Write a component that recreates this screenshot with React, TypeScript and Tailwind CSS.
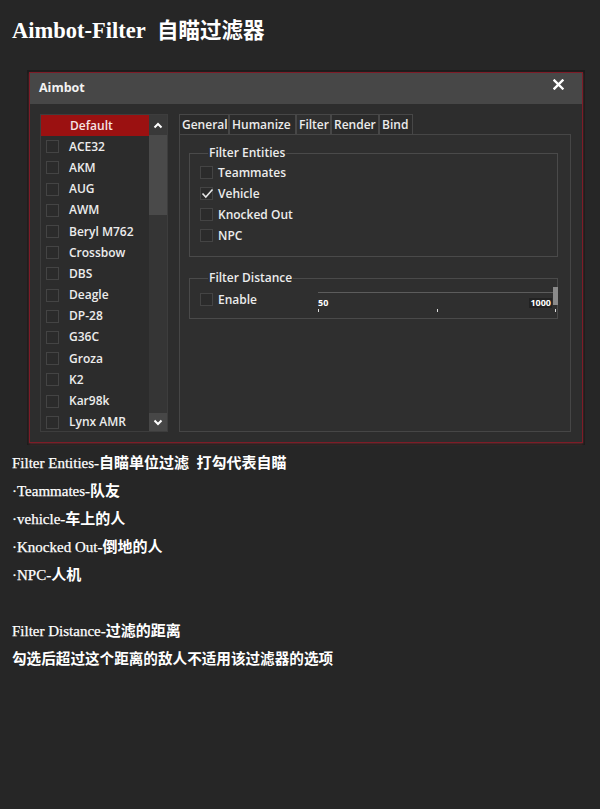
import React from "react";

const CJK = /([\u2E80-\u9FFF\uFF00-\uFFEF]+)/;

function Mixed({ text }: { text: string }) {
  const parts = text.split(CJK);
  return (
    <>
      {parts.map((p, i) =>
        CJK.test(p) ? (
          <span key={i} className="font-bold">
            {p}
          </span>
        ) : (
          <span key={i} className="[-webkit-text-stroke:0.25px_#ffffff]">
            {p}
          </span>
        )
      )}
    </>
  );
}

function Box({ checked }: { checked?: boolean }) {
  return (
    <span className="relative flex h-[13px] w-[13px] shrink-0 items-center justify-center border border-[#444444] bg-[#2b2b2b]">
      {checked && (
        <svg width="13" height="13" viewBox="0 0 13 13" className="absolute left-[0px] top-[-1px]">
          <polyline points="1.5,6.5 4.8,10 11.5,2.5" fill="none" stroke="#e6e6e6" strokeWidth="1.6" />
        </svg>
      )}
    </span>
  );
}

const weapons = [
  "ACE32",
  "AKM",
  "AUG",
  "AWM",
  "Beryl M762",
  "Crossbow",
  "DBS",
  "Deagle",
  "DP-28",
  "G36C",
  "Groza",
  "K2",
  "Kar98k",
  "Lynx AMR",
];

const tabs = [
  { name: "General", w: "w-[50px]" },
  { name: "Humanize", w: "w-[67px]" },
  { name: "Filter", w: "w-[35px]" },
  { name: "Render", w: "w-[48px]" },
  { name: "Bind", w: "w-[34px]" },
];

const lines = [
  "Filter Entities-自瞄单位过滤\u00a0\u00a0打勾代表自瞄",
  "·Teammates-队友",
  "·vehicle-车上的人",
  "·Knocked Out-倒地的人",
  "·NPC-人机",
];

export default function App() {
  const ui = { fontFamily: '"Open Sans", "Noto Sans", sans-serif' };
  return (
    <div className="min-h-[809px] w-[600px] bg-[#262626] text-white">
      <h1
        className="pl-[12px] pt-[17px] text-[22.5px] font-bold leading-[28px]"
        style={{ fontFamily: '"Liberation Serif", "Noto Sans CJK SC", serif' }}
      >
        Aimbot-Filter{"\u00a0\u00a0"}
        <span className="text-[21.5px]">自瞄过滤器</span>
      </h1>

      {/* screenshot frame */}
      <div className="ml-[27px] mt-[25px] w-[558px] bg-[#1c1c1c] p-[2px]" style={ui}>
        <div className="flex h-[371px] flex-col border border-[#7e1c28] bg-[#2d2d2d] shadow-[0_1px_2px_rgba(200,80,80,0.35)]">
          {/* title bar */}
          <div className="flex h-[31px] shrink-0 items-center justify-between bg-[#474747] pl-[9px] pr-[18px]">
            <span className="text-[12.5px] font-bold text-[#f2f2f2]">Aimbot</span>
            <svg width="11" height="11" viewBox="0 0 11 11" className="mt-[-9px]">
              <path d="M1.5 1.5 L9.5 9.5 M9.5 1.5 L1.5 9.5" stroke="#ffffff" strokeWidth="2.4" strokeLinecap="square" />
            </svg>
          </div>

          {/* body */}
          <div className="flex gap-[11px] pl-[10px] pt-[10px]">
            {/* list */}
            <div className="flex h-[318px] w-[128px] border border-[#3d3d3d] bg-[#2c2c2c] text-[12px] font-semibold text-[#ececec]">
              <div className="flex w-[108px] flex-col">
                <div className="flex h-[21.2px] shrink-0 items-center bg-[#9b1111] pl-[29px] text-[#f6e4e4]">Default</div>
                {weapons.map((w) => (
                  <div key={w} className="flex h-[21.2px] shrink-0 items-center gap-[10px] pl-[5px]">
                    <Box />
                    <span>{w}</span>
                  </div>
                ))}
              </div>
              <div className="flex w-[18px] flex-col bg-[#353535]">
                <div className="flex h-[20px] items-center justify-center bg-[#393939]">
                  <svg width="10" height="7" viewBox="0 0 10 7">
                    <polyline points="1.5,5.5 5,2 8.5,5.5" fill="none" stroke="#ffffff" strokeWidth="2" />
                  </svg>
                </div>
                <div className="h-[80px] bg-[#4a4a4a]" />
                <div className="flex-1" />
                <div className="flex h-[18px] items-center justify-center bg-[#474747]">
                  <svg width="10" height="7" viewBox="0 0 10 7">
                    <polyline points="1.5,1.5 5,5 8.5,1.5" fill="none" stroke="#ffffff" strokeWidth="2" />
                  </svg>
                </div>
              </div>
            </div>

            {/* tabs */}
            <div className="flex w-[392px] flex-col text-[12px] font-semibold text-[#ececec]">
              <div className="flex h-[20px]">
                {tabs.map((t) => (
                  <div
                    key={t.name}
                    className={`${t.w} flex items-center border border-b-0 border-[#474747] pl-[2px] ${
                      t.name === "Filter" ? "bg-[#303030]" : "bg-[#2b2b2b]"
                    }`}
                  >
                    {t.name}
                  </div>
                ))}
              </div>
              <div className="flex h-[298px] flex-col gap-[13px] border border-[#464646] bg-[#2f2f2f] pl-[9px] pr-[12px] pt-[10px]">
                <fieldset className="border border-[#4a4a4a] pb-[10px] pl-[10px] pt-[1px]">
                  <legend className="ml-[8px] px-[1px] leading-[16px]">Filter Entities</legend>
                  {["Teammates", "Vehicle", "Knocked Out", "NPC"].map((n) => (
                    <div key={n} className="flex h-[21px] items-center gap-[5px]">
                      <Box checked={n === "Vehicle"} />
                      <span>{n}</span>
                    </div>
                  ))}
                </fieldset>
                <fieldset className="border border-[#4a4a4a] pb-[8px] pl-[10px] pt-[3px]">
                  <legend className="ml-[8px] px-[1px] leading-[16px]">Filter Distance</legend>
                  <div className="flex h-[21px] items-center">
                    <div className="flex w-[117px] items-center gap-[5px]">
                      <Box />
                      <span>Enable</span>
                    </div>
                    {/* slider widget */}
                    <div className="relative mt-[2px] h-[26px] flex-1">
                      <div className="absolute left-[1px] right-[4px] top-[4px] h-px bg-[#5c5c5c]" />
                      <div className="absolute right-[-1px] top-[-1px] h-[18px] w-[5px] bg-[#8a8a8a]" />
                      <span className="absolute left-[1px] top-[10px] text-[9px] font-bold leading-[10px] text-white">50</span>
                      <span className="absolute right-[5px] top-[10px] bg-[#222222] px-[1px] text-[9px] font-bold leading-[10px] text-white">
                        1000
                      </span>
                      <div className="absolute left-[1px] top-[21px] h-[3px] w-px bg-[#dddddd]" />
                      <div className="absolute left-[120px] top-[21px] h-[3px] w-px bg-[#dddddd]" />
                      <div className="absolute right-[1px] top-[21px] h-[3px] w-px bg-[#dddddd]" />
                    </div>
                  </div>
                </fieldset>
              </div>
            </div>
          </div>
        </div>
      </div>

      {/* description */}
      <div
        className="pl-[12px] pt-[4px] text-[15px] leading-[28px] text-white"
        style={{ fontFamily: '"Liberation Serif", "Noto Sans CJK SC", serif' }}
      >
        {lines.map((l) => (
          <div key={l} className="whitespace-pre">
            <Mixed text={l} />
          </div>
        ))}
        <div className="h-[28px]" />
        <div>
          <Mixed text="Filter Distance-过滤的距离" />
        </div>
        <div className="text-[14.6px] font-bold">勾选后超过这个距离的敌人不适用该过滤器的选项</div>
      </div>
    </div>
  );
}
